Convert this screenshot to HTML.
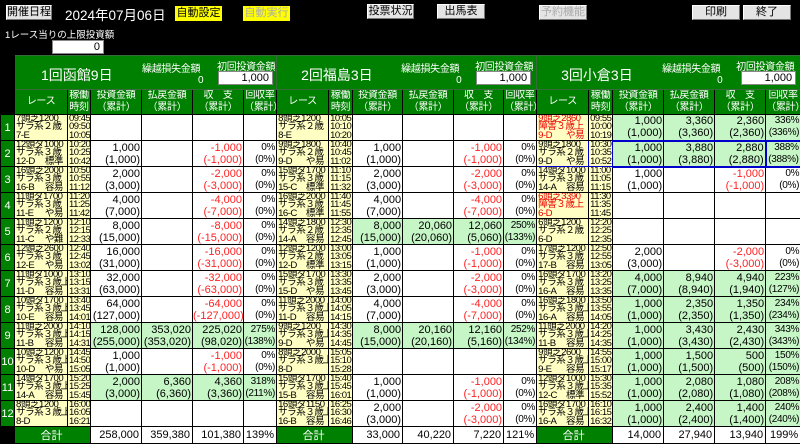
<!DOCTYPE html>
<html><head><meta charset="utf-8"><style>
*{margin:0;padding:0;box-sizing:border-box}
body{width:800px;height:443px;background:#000;overflow:hidden;position:relative;font-family:"Liberation Sans","Noto Sans CJK JP",sans-serif;color:#000}
.btn{position:absolute;height:15px;background:#e4e4e4;border:1px solid #fff;border-right-color:#777;border-bottom-color:#777;font-size:11px;line-height:13px;text-align:center;color:#000}
.yel{background:#ffff00;border-color:#ffff00}
.abs{position:absolute;color:#fff}
table{position:absolute;left:0;top:55px;border-collapse:collapse;table-layout:fixed;width:800px}
td{border:1px solid #000;padding:0;overflow:hidden;white-space:nowrap}
.hv{background:#008000;color:#fff;position:relative;height:34px;border:1px solid #3a6a3a}
.ch td{background:#008000;color:#fff;font-size:10px;line-height:12px;text-align:center;height:25px;letter-spacing:-0.3px}
.n{background:#008000;color:#fff;font-size:11px;text-align:center}
.r{background:#ffffc4;font-size:9.6px;line-height:8.3px;padding-left:1px;letter-spacing:-0.5px}
.r div{display:flex;justify-content:space-between;padding-right:4px}
.t{background:#ffffc4;font-size:9.5px;line-height:8.3px;text-align:left;padding-left:1px;letter-spacing:-0.5px}
.v{background:#fff;font-size:11px;line-height:12px;text-align:right;padding-right:1px}
.pc{font-size:10px;letter-spacing:-0.3px}
.g{background:#c6f5c6}
.red{color:#f22}
.rd{color:#e00}
tr.d td{height:26px}
.tot td{height:17px;background:#fff;font-size:11px;text-align:right;padding-right:2px}
.tot td.tl{background:#008000;color:#fff;text-align:center}
.tot td.bk{background:#000}
.inp{position:absolute;background:#fff;border:1px solid #888;color:#000;font-size:11px;text-align:right;padding-right:3px;line-height:12px}
.vt{position:absolute;font-size:14px}
.sm{position:absolute;font-size:10px;letter-spacing:-0.3px}
</style></head><body>
<div class="btn" style="left:6px;top:5px;width:46px">開催日程</div>
<div class="abs" style="left:65px;top:4px;font-size:13.5px">2024年07月06日</div>
<div class="btn yel" style="left:175px;top:6px;width:47px">自動設定</div>
<div class="btn yel" style="left:243px;top:6px;width:47px;color:#aaa">自動実行</div>
<div class="btn" style="left:367px;top:4px;width:47px">投票状況</div>
<div class="btn" style="left:437px;top:4px;width:48px">出馬表</div>
<div class="btn" style="left:539px;top:5px;width:48px;color:#aaa">予約機能</div>
<div class="btn" style="left:692px;top:5px;width:48px">印刷</div>
<div class="btn" style="left:743px;top:5px;width:48px">終了</div>
<div class="abs" style="left:5px;top:27px;font-size:9.5px">1レース当りの上限投資額</div>
<div class="inp" style="left:52px;top:40px;width:52px;height:14px">0</div>
<table>
<colgroup><col style="width:14px"><col style="width:53px"><col style="width:23px"><col style="width:51px"><col style="width:51px"><col style="width:51px"><col style="width:33px"><col style="width:52px"><col style="width:24px"><col style="width:50px"><col style="width:51px"><col style="width:50px"><col style="width:33px"><col style="width:52px"><col style="width:24px"><col style="width:51px"><col style="width:51px"><col style="width:51px"><col style="width:35px"></colgroup>
<tr><td style="background:#000;height:34px"></td>
<td colspan="6" class="hv"><span class="vt" style="left:26px;top:9px">1回函館9日</span><span class="sm" style="left:127px;top:4px">繰越損失金額</span><span class="sm" style="left:183px;top:19px">0</span><span class="sm" style="left:202px;top:2px">初回投資金額</span><div class="inp" style="left:203px;top:15px;width:55px;height:14px">1,000</div></td>
<td colspan="6" class="hv"><span class="vt" style="left:24px;top:9px">2回福島3日</span><span class="sm" style="left:124px;top:4px">繰越損失金額</span><span class="sm" style="left:179px;top:19px">0</span><span class="sm" style="left:198px;top:2px">初回投資金額</span><div class="inp" style="left:199px;top:15px;width:55px;height:14px">1,000</div></td>
<td colspan="6" class="hv"><span class="vt" style="left:24px;top:9px">3回小倉3日</span><span class="sm" style="left:125px;top:4px">繰越損失金額</span><span class="sm" style="left:180px;top:19px">0</span><span class="sm" style="left:199px;top:2px">初回投資金額</span><div class="inp" style="left:204px;top:15px;width:55px;height:14px">1,000</div></td></tr>
<tr class="ch"><td style="background:#000"></td>
<td>レース</td><td>稼働<br>時刻</td><td>投資金額<br>（累計）</td><td>払戻金額<br>（累計）</td><td>収　支<br>（累計）</td><td>回収率<br>（累計）</td>
<td>レース</td><td>稼働<br>時刻</td><td>投資金額<br>（累計）</td><td>払戻金額<br>（累計）</td><td>収　支<br>（累計）</td><td>回収率<br>（累計）</td>
<td>レース</td><td>稼働<br>時刻</td><td>投資金額<br>（累計）</td><td>払戻金額<br>（累計）</td><td>収　支<br>（累計）</td><td>回収率<br>（累計）</td></tr>

<tr class="d"><td class="n">1</td>
<td class="r"><div>7頭芝1200</div><div>サラ系２歳</div><div>7-E</div></td><td class="t">09:45<br>09:50<br>10:05</td><td class="v"></td><td class="v"></td><td class="v"></td><td class="v pc"></td>
<td class="r"><div>8頭芝1200</div><div>サラ系２歳</div><div>8-E</div></td><td class="t">10:05<br>10:10<br>10:20</td><td class="v"></td><td class="v"></td><td class="v"></td><td class="v pc"></td>
<td class="r rd"><div>9頭芝2860</div><div>障害３歳上</div><div><span>9-D</span><span>や易</span></div></td><td class="t">09:55<br>10:00<br>10:19</td><td class="v g">1,000<br>(1,000)</td><td class="v g">3,360<br>(3,360)</td><td class="v g">2,360<br>(2,360)</td><td class="v g pc">336%<br>(336%)</td></tr>

<tr class="d"><td class="n">2</td>
<td class="r"><div>12頭ダ1000</div><div>サラ系３歳</div><div><span>12-D</span><span>標準</span></div></td><td class="t">10:20<br>10:25<br>10:42</td><td class="v">1,000<br>(1,000)</td><td class="v"></td><td class="v red">-1,000<br>(-1,000)</td><td class="v pc">0%<br>(0%)</td>
<td class="r"><div>9頭芝1800</div><div>サラ系２歳</div><div><span>9-D</span><span>や易</span></div></td><td class="t">10:40<br>10:45<br>11:02</td><td class="v">1,000<br>(1,000)</td><td class="v"></td><td class="v red">-1,000<br>(-1,000)</td><td class="v pc">0%<br>(0%)</td>
<td class="r" style="border:1px solid #00c"><div>9頭芝1800</div><div>サラ系２歳</div><div><span>9-D</span><span>や易</span></div></td><td class="t" style="border:1px solid #00c">10:30<br>10:35<br>10:52</td><td class="v g" style="border-top:2px solid #00c;border-bottom:2px solid #00c">1,000<br>(1,000)</td><td class="v g" style="border-top:2px solid #00c;border-bottom:2px solid #00c">3,880<br>(3,880)</td><td class="v g" style="border-top:2px solid #00c;border-bottom:2px solid #00c">2,880<br>(2,880)</td><td class="v g pc" style="border:2px solid #00c">388%<br>(388%)</td></tr>

<tr class="d"><td class="n">3</td>
<td class="r"><div>16頭芝2000</div><div>サラ系３歳</div><div><span>16-B</span><span>容易</span></div></td><td class="t">10:50<br>10:55<br>11:12</td><td class="v">2,000<br>(3,000)</td><td class="v"></td><td class="v red">-2,000<br>(-3,000)</td><td class="v pc">0%<br>(0%)</td>
<td class="r"><div>15頭ダ1700</div><div>サラ系３歳</div><div><span>15-C</span><span>標準</span></div></td><td class="t">11:10<br>11:15<br>11:32</td><td class="v">2,000<br>(3,000)</td><td class="v"></td><td class="v red">-2,000<br>(-3,000)</td><td class="v pc">0%<br>(0%)</td>
<td class="r"><div>14頭ダ1000</div><div>サラ系３歳</div><div><span>14-A</span><span>容易</span></div></td><td class="t">11:00<br>11:05<br>11:15</td><td class="v">1,000<br>(1,000)</td><td class="v"></td><td class="v red">-1,000<br>(-1,000)</td><td class="v pc">0%<br>(0%)</td></tr>

<tr class="d"><td class="n">4</td>
<td class="r"><div>11頭ダ1700</div><div>サラ系３歳</div><div><span>11-E</span><span>や易</span></div></td><td class="t">11:20<br>11:25<br>11:42</td><td class="v">4,000<br>(7,000)</td><td class="v"></td><td class="v red">-4,000<br>(-7,000)</td><td class="v pc">0%<br>(0%)</td>
<td class="r"><div>16頭芝2000</div><div>サラ系３歳</div><div><span>16-C</span><span>標準</span></div></td><td class="t">11:40<br>11:45<br>11:55</td><td class="v">4,000<br>(7,000)</td><td class="v"></td><td class="v red">-4,000<br>(-7,000)</td><td class="v pc">0%<br>(0%)</td>
<td class="r rd"><div>6頭芝3390</div><div>障害３歳上</div><div>6-D</div></td><td class="t">11:30<br>11:35<br>11:45</td><td class="v"></td><td class="v"></td><td class="v"></td><td class="v pc"></td></tr>

<tr class="d"><td class="n">5</td>
<td class="r"><div>11頭芝1200</div><div>サラ系２歳</div><div><span>11-C</span><span>や難</span></div></td><td class="t">12:10<br>12:15<br>12:33</td><td class="v">8,000<br>(15,000)</td><td class="v"></td><td class="v red">-8,000<br>(-15,000)</td><td class="v pc">0%<br>(0%)</td>
<td class="r"><div>14頭芝1800</div><div>サラ系２歳</div><div><span>14-A</span><span>容易</span></div></td><td class="t">12:30<br>12:35<br>12:45</td><td class="v g">8,000<br>(15,000)</td><td class="v g">20,060<br>(20,060)</td><td class="v g">12,060<br>(5,060)</td><td class="v g pc">250%<br>(133%)</td>
<td class="r"><div>6頭芝1200</div><div>サラ系２歳</div><div>6-D</div></td><td class="t">12:20<br>12:25<br>12:35</td><td class="v"></td><td class="v"></td><td class="v"></td><td class="v pc"></td></tr>

<tr class="d"><td class="n">6</td>
<td class="r"><div>12頭芝2600</div><div>サラ系３歳</div><div><span>12-E</span><span>や易</span></div></td><td class="t">12:40<br>12:45<br>13:02</td><td class="v">16,000<br>(31,000)</td><td class="v"></td><td class="v red">-16,000<br>(-31,000)</td><td class="v pc">0%<br>(0%)</td>
<td class="r"><div>12頭芝1200</div><div>サラ系２歳</div><div><span>12-D</span><span>標準</span></div></td><td class="t">13:00<br>13:05<br>13:15</td><td class="v">1,000<br>(1,000)</td><td class="v"></td><td class="v red">-1,000<br>(-1,000)</td><td class="v pc">0%<br>(0%)</td>
<td class="r"><div>17頭芝1200</div><div>サラ系３歳</div><div><span>17-B</span><span>容易</span></div></td><td class="t">12:50<br>12:55<br>13:05</td><td class="v">2,000<br>(3,000)</td><td class="v"></td><td class="v red">-2,000<br>(-3,000)</td><td class="v pc">0%<br>(0%)</td></tr>

<tr class="d"><td class="n">7</td>
<td class="r"><div>11頭ダ1000</div><div>サラ系３歳上</div><div><span>11-D</span><span>容易</span></div></td><td class="t">13:10<br>13:15<br>13:31</td><td class="v">32,000<br>(63,000)</td><td class="v"></td><td class="v red">-32,000<br>(-63,000)</td><td class="v pc">0%<br>(0%)</td>
<td class="r"><div>15頭ダ1700</div><div>サラ系３歳</div><div><span>15-D</span><span>や易</span></div></td><td class="t">13:30<br>13:35<br>13:45</td><td class="v">2,000<br>(3,000)</td><td class="v"></td><td class="v red">-2,000<br>(-3,000)</td><td class="v pc">0%<br>(0%)</td>
<td class="r"><div>16頭ダ1700</div><div>サラ系３歳</div><div><span>16-A</span><span>容易</span></div></td><td class="t">13:20<br>13:25<br>13:35</td><td class="v g">4,000<br>(7,000)</td><td class="v g">8,940<br>(8,940)</td><td class="v g">4,940<br>(1,940)</td><td class="v g pc">223%<br>(127%)</td></tr>

<tr class="d"><td class="n">8</td>
<td class="r"><div>10頭ダ1700</div><div>サラ系３歳上</div><div><span>10-E</span><span>容易</span></div></td><td class="t">13:40<br>13:45<br>14:01</td><td class="v">64,000<br>(127,000)</td><td class="v"></td><td class="v red">-64,000<br>(-127,000)</td><td class="v pc">0%<br>(0%)</td>
<td class="r"><div>11頭芝2000</div><div>サラ系３歳上</div><div><span>11-D</span><span>容易</span></div></td><td class="t">14:00<br>14:05<br>14:15</td><td class="v">4,000<br>(7,000)</td><td class="v"></td><td class="v red">-4,000<br>(-7,000)</td><td class="v pc">0%<br>(0%)</td>
<td class="r"><div>16頭芝1800</div><div>サラ系３歳上</div><div><span>16-A</span><span>容易</span></div></td><td class="t">13:50<br>13:55<br>14:05</td><td class="v g">1,000<br>(1,000)</td><td class="v g">2,350<br>(2,350)</td><td class="v g">1,350<br>(1,350)</td><td class="v g pc">234%<br>(234%)</td></tr>

<tr class="d"><td class="n">9</td>
<td class="r"><div>11頭芝2000</div><div>サラ系３歳上</div><div><span>11-B</span><span>容易</span></div></td><td class="t">14:10<br>14:15<br>14:31</td><td class="v g">128,000<br>(255,000)</td><td class="v g">353,020<br>(353,020)</td><td class="v g">225,020<br>(98,020)</td><td class="v g pc">275%<br>(138%)</td>
<td class="r"><div>9頭芝1200</div><div>サラ系３歳上</div><div><span>9-D</span><span>や易</span></div></td><td class="t">14:30<br>14:35<br>14:45</td><td class="v g">8,000<br>(15,000)</td><td class="v g">20,160<br>(20,160)</td><td class="v g">12,160<br>(5,160)</td><td class="v g pc">252%<br>(134%)</td>
<td class="r"><div>11頭芝2000</div><div>サラ系３歳上</div><div><span>11-B</span><span>容易</span></div></td><td class="t">14:20<br>14:25<br>14:35</td><td class="v g">1,000<br>(1,000)</td><td class="v g">3,430<br>(3,430)</td><td class="v g">2,430<br>(2,430)</td><td class="v g pc">343%<br>(343%)</td></tr>

<tr class="d"><td class="n">10</td>
<td class="r"><div>10頭芝1200</div><div>サラ系３歳上</div><div><span>10-D</span><span>や易</span></div></td><td class="t">14:45<br>14:50<br>15:05</td><td class="v">1,000<br>(1,000)</td><td class="v"></td><td class="v red">-1,000<br>(-1,000)</td><td class="v pc">0%<br>(0%)</td>
<td class="r"><div>8頭芝2000</div><div>サラ系３歳上</div><div>8-D</div></td><td class="t">15:05<br>15:10<br>15:28</td><td class="v"></td><td class="v"></td><td class="v"></td><td class="v pc"></td>
<td class="r"><div>9頭芝2600</div><div>サラ系３歳上</div><div><span>9-E</span><span>容易</span></div></td><td class="t">14:55<br>15:00<br>15:17</td><td class="v g">1,000<br>(1,000)</td><td class="v g">1,500<br>(1,500)</td><td class="v g">500<br>(500)</td><td class="v g pc">150%<br>(150%)</td></tr>

<tr class="d"><td class="n">11</td>
<td class="r"><div>14頭ダ1700</div><div>サラ系３歳上</div><div><span>14-A</span><span>容易</span></div></td><td class="t">15:20<br>15:25<br>15:45</td><td class="v g">2,000<br>(3,000)</td><td class="v g">6,360<br>(6,360)</td><td class="v g">4,360<br>(3,360)</td><td class="v g pc">318%<br>(211%)</td>
<td class="r"><div>15頭ダ1700</div><div>サラ系３歳上</div><div><span>15-B</span><span>容易</span></div></td><td class="t">15:40<br>15:45<br>16:01</td><td class="v">1,000<br>(1,000)</td><td class="v"></td><td class="v red">-1,000<br>(-1,000)</td><td class="v pc">0%<br>(0%)</td>
<td class="r"><div>12頭ダ1000</div><div>サラ系３歳上</div><div><span>12-C</span><span>標準</span></div></td><td class="t">15:30<br>15:35<br>15:52</td><td class="v g">1,000<br>(1,000)</td><td class="v g">2,080<br>(2,080)</td><td class="v g">1,080<br>(1,080)</td><td class="v g pc">208%<br>(208%)</td></tr>

<tr class="d"><td class="n">12</td>
<td class="r"><div>8頭芝1200</div><div>サラ系３歳上</div><div>8-D</div></td><td class="t">16:00<br>16:05<br>16:21</td><td class="v"></td><td class="v"></td><td class="v"></td><td class="v pc"></td>
<td class="r"><div>16頭ダ1150</div><div>サラ系３歳上</div><div><span>16-B</span><span>容易</span></div></td><td class="t">16:25<br>16:30<br>16:46</td><td class="v">2,000<br>(3,000)</td><td class="v"></td><td class="v red">-2,000<br>(-3,000)</td><td class="v pc">0%<br>(0%)</td>
<td class="r"><div>16頭ダ1700</div><div>サラ系３歳上</div><div><span>16-A</span><span>容易</span></div></td><td class="t">16:10<br>16:15<br>16:32</td><td class="v g">1,000<br>(1,000)</td><td class="v g">2,400<br>(2,400)</td><td class="v g">1,400<br>(1,400)</td><td class="v g pc">240%<br>(240%)</td></tr>

<tr class="tot"><td class="bk"></td>
<td class="tl" colspan="2">合計</td><td>258,000</td><td>359,380</td><td>101,380</td><td>139%</td>
<td class="tl" colspan="2">合計</td><td>33,000</td><td>40,220</td><td>7,220</td><td>121%</td>
<td class="tl" colspan="2">合計</td><td>14,000</td><td>27,940</td><td>13,940</td><td>199%</td></tr>
</table>
</body></html>
